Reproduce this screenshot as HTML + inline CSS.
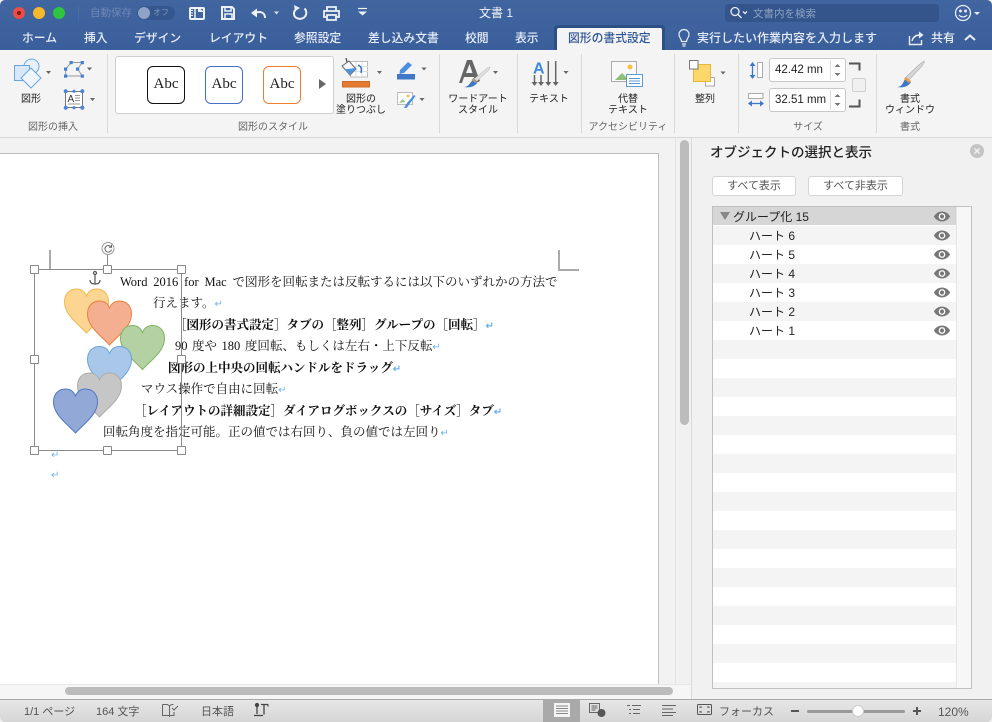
<!DOCTYPE html>
<html lang="ja"><head><meta charset="utf-8"><style>
html,body{margin:0;padding:0}
body{width:992px;height:722px;overflow:hidden;position:relative;background:#f1f1f1;font-family:"Liberation Sans","Noto Sans CJK JP",sans-serif;font-size:11px;color:#222}
.a{position:absolute}
.t{position:absolute;white-space:nowrap;line-height:14px}
.tab{position:absolute;top:30px;font-size:11.8px;line-height:16px;color:#e8eef8;white-space:nowrap;font-weight:500}
.lab{position:absolute;font-size:10px;line-height:11px;color:#222;text-align:center;white-space:pre;transform:translateX(-50%)}
.grp{position:absolute;top:121px;font-size:10px;line-height:13px;color:#666;white-space:nowrap;transform:translateX(-50%)}
.sep{position:absolute;top:54px;width:1px;height:79px;background:#d9d9d9}
.d{position:absolute;white-space:nowrap;font-family:"Liberation Serif","Noto Serif CJK SC",serif;font-size:12.5px;line-height:18px;color:#111}
.b{font-weight:700}
.r{color:#6fb2ee;font-size:10px}
.h{position:absolute;width:7px;height:7px;background:#fff;border:1px solid #888;border-radius:1px}
.row{position:absolute;left:713px;width:243px;height:19px;font-size:12px;line-height:21px;color:#222}
.row span{position:absolute;left:36px}
.eye{position:absolute;left:220px;top:3px}
.ab{position:absolute;width:36px;height:36px;border-radius:6px;background:#fff;top:66px;font:15px/34px "Liberation Serif",serif;text-align:center;color:#222}
.btn{position:absolute;top:176px;height:18px;background:#fff;border:1px solid #d4d4d4;border-radius:3px;text-align:center;font-size:11px;line-height:18px;color:#555}
.inp{position:absolute;left:769px;width:75px;height:22px;background:#fff;border:1px solid #c8c8c8;border-radius:3px;font-size:11.5px;line-height:22px;text-indent:5px;color:#222;overflow:hidden}
</style></head><body>

<!-- title bar -->
<div class="a" style="left:0;top:0;width:992px;height:50px;background:linear-gradient(#41659f,#3a5f9c);border-radius:5px 5px 0 0"></div>
<div class="a" style="left:13px;top:7px;width:12px;height:12px;border-radius:50%;background:#ed4c47"></div>
<div class="a" style="left:17px;top:11px;width:4px;height:4px;border-radius:50%;background:#7d1a14"></div>
<div class="a" style="left:33px;top:7px;width:12px;height:12px;border-radius:50%;background:#f6b92c"></div>
<div class="a" style="left:53px;top:7px;width:12px;height:12px;border-radius:50%;background:#2dc43f"></div>
<div class="a" style="left:78px;top:5px;width:1px;height:16px;background:#4c6da3"></div>
<div class="t" style="left:90px;top:6px;font-size:10.5px;color:#6f87b3">自動保存</div>
<div class="a" style="left:137px;top:6px;width:38px;height:14px;border-radius:7px;background:#34578f"></div>
<div class="a" style="left:138px;top:7px;width:12px;height:12px;border-radius:50%;background:#8ea3c6"></div>
<div class="t" style="left:153px;top:6px;font-size:8px;color:#7f96bd">オフ</div>
<svg class="a" style="left:0;top:0" width="400" height="26" fill="none" stroke="#eef2f8" stroke-width="2">
<rect x="190" y="8" width="14" height="11" rx="1"/><path d="M195 8v11" stroke-width="1.500"/><path d="M191 10.500h2M191 13h2M191 15.500h2" stroke-width="1"/><path d="M198 7l6 5h-6z" fill="#eef2f8" stroke="none"/>
<path d="M222 7h10l2 2v10h-12z"/><path d="M225 7v4h6V7M225 19v-5h7v5" stroke-width="1.500"/>
<path d="M251 13l6-4.500v9z" fill="#eef2f8" stroke="none"/><path d="M255 13c5-2 10-1 10 5"/><path d="M274 11.500h5l-2.500 3z" fill="#d5deed" stroke="none"/>
<path d="M298 8c-3 1.500-4.500 3.500-4 6.500.6 3.500 6 6 10 3 3-2.500 3-6.500.5-9"/><path d="M294 5l6 3-5 3z" fill="#eef2f8" stroke="none"/>
<path d="M327 11V7h9v4M327 17h-3v-6h15v6h-3M327 15h9v5h-9z" stroke-width="1.800"/>
<path d="M358 8.500h9" stroke-width="1.200"/><path d="M358 11.500h9l-4.500 4z" fill="#eef2f8" stroke="none"/>
</svg>
<div class="t" style="left:479px;top:6px;font-size:12px;color:#f0f3f8">文書 1</div>
<div class="a" style="left:725px;top:4px;width:214px;height:18px;background:#34558c;border-radius:3px"></div>
<svg class="a" style="left:728px;top:5px" width="24" height="16" fill="none" stroke="#e9eef6" stroke-width="1.300"><circle cx="7" cy="6.500" r="4"/><path d="M10 9.500l3.500 3.500"/><path d="M15 6.500l2 2 2-2"/></svg>
<div class="t" style="left:753px;top:7px;font-size:10.5px;color:#8ea2c4">文書内を検索</div>
<svg class="a" style="left:954px;top:4px" width="30" height="20" fill="none" stroke="#e9eef6" stroke-width="1.300"><circle cx="9" cy="9" r="7.500"/><circle cx="6.500" cy="7" r=".8" fill="#e9eef6"/><circle cx="11.500" cy="7" r=".8" fill="#e9eef6"/><path d="M5 11c2 2.500 6 2.500 8 0"/><path d="M20 8h6l-3 3z" fill="#e9eef6" stroke="none"/></svg>

<!-- tabs -->
<div class="tab" style="left:22px">ホーム</div>
<div class="tab" style="left:84px">挿入</div>
<div class="tab" style="left:134px">デザイン</div>
<div class="tab" style="left:209px">レイアウト</div>
<div class="tab" style="left:294px">参照設定</div>
<div class="tab" style="left:368px">差し込み文書</div>
<div class="tab" style="left:465px">校閲</div>
<div class="tab" style="left:515px">表示</div>
<div class="a" style="left:554px;top:25px;width:111px;height:25px;background:#2c4f86;border-radius:4px 4px 0 0"></div>
<div class="a" style="left:557px;top:28px;width:105px;height:22px;background:#f4f4f4;border-radius:2px 2px 0 0"></div>
<div class="tab" style="left:568px;color:#2f5597">図形の書式設定</div>
<svg class="a" style="left:676px;top:28px" width="16" height="20" fill="none" stroke="#e9eef6" stroke-width="1.200"><path d="M5.500 13.500c0-3-2.500-3.500-2.500-7a5 5 0 0 1 10 0c0 3.500-2.500 4-2.500 7z"/><path d="M6 16h4M6.500 18h3"/></svg>
<div class="tab" style="left:697px;font-size:12px">実行したい作業内容を入力します</div>
<svg class="a" style="left:908px;top:30px" width="18" height="16" fill="none" stroke="#e9eef6" stroke-width="1.400"><path d="M1.500 6v8.500h12V10"/><path d="M4 11c1-4 4-6 8-6"/><path d="M11 1.500l4.500 3.500-4.500 3.500z" fill="#e9eef6" stroke="none"/></svg>
<div class="tab" style="left:931px;font-size:12px">共有</div>
<svg class="a" style="left:963px;top:33px" width="14" height="10" fill="none" stroke="#e9eef6" stroke-width="2"><path d="M2 7l5-4.500L12 7"/></svg>

<!-- ribbon -->
<div class="a" style="left:0;top:50px;width:992px;height:87px;background:#f4f4f4;border-bottom:1px solid #d6d6d6"></div>
<div class="sep" style="left:107px"></div><div class="sep" style="left:439px"></div><div class="sep" style="left:517px"></div><div class="sep" style="left:581px"></div><div class="sep" style="left:674px"></div><div class="sep" style="left:738px"></div><div class="sep" style="left:876px"></div>

<div class="a" style="left:115px;top:56px;width:217px;height:56px;background:#fff;border:1px solid #cfcfcf;border-radius:3px"></div>
<div class="ab" style="left:147px;border:1px solid #111">Abc</div>
<div class="ab" style="left:205px;border:1px solid #4472c4">Abc</div>
<div class="ab" style="left:263px;border:1px solid #ed7d31">Abc</div>

<svg class="a" style="left:0;top:0" width="992" height="140" fill="none">
<!-- shapes -->
<g stroke="#6aa6de" stroke-width="1"><circle cx="31.500" cy="66.500" r="7.500" fill="#e8f1fb"/><rect x="14.500" y="65.500" width="15" height="15" fill="#d9e8f8"/><path d="M31 68l10 10-10 10-10-10z" fill="#eef5fc"/></g>
<path d="M65.700 69L71 62.500h11.300L77.700 69l4.600 7H65.700z" stroke="#999"/>
<g fill="#3f80d8"><rect x="64" y="67.500" width="3.200" height="3.200"/><rect x="69.500" y="61" width="3.200" height="3.200"/><rect x="80.700" y="61" width="3.200" height="3.200"/><rect x="76" y="67.500" width="3.200" height="3.200"/><rect x="64" y="74.500" width="3.200" height="3.200"/><rect x="80.700" y="74.500" width="3.200" height="3.200"/></g>
<path d="M46 71h5l-2.500 3zM87 67.500h5l-2.500 3zM90 98h5l-2.500 3z" fill="#666"/>
<rect x="65.500" y="91.500" width="17" height="16" fill="#fff" stroke="#777"/>
<g fill="#4a86d8"><circle cx="65.700" cy="91.300" r="2"/><circle cx="82.300" cy="91.300" r="2"/><circle cx="65.700" cy="107.700" r="2"/><circle cx="82.300" cy="107.700" r="2"/><circle cx="74" cy="91.300" r="1.600"/><circle cx="74" cy="107.700" r="1.600"/></g>
<text x="67.500" y="102" font-family="Liberation Sans" font-size="10" fill="#333">A</text>
<path d="M75 95.500h5M75 98h5M75 100.500h5M68 104h12" stroke="#999"/>
<path d="M318 79l7 5-7 5z" fill="#666" transform="translate(1,0)"/>
<!-- fill -->
<rect x="350.500" y="61.500" width="17" height="15.500" fill="#fff" stroke="#bbb"/><path d="M356 62v15M362 62v15M351 66.500h17M351 71.500h17" stroke="#ddd"/>
<path d="M342 66l7-5 7 8-6 6z" fill="#f4f8fc" stroke="#666"/><path d="M344 69l6 6 6-6-1-1-6 1z" fill="#4f92d6"/><path d="M347 62l-1-4" stroke="#444" stroke-width="1.200"/>
<path d="M358 65c3 1 4 4 3 8" stroke="#2f75c5" stroke-width="1.400"/>
<rect x="342.500" y="81.500" width="27" height="5.500" fill="#e67c34" stroke="#cf6a22"/>
<path d="M377 71h5l-2.500 3zM421.500 67.500h5l-2.500 3zM419.500 98h5l-2.500 3z" fill="#666"/>
<path d="M400 70l8-8 4 3-8 8-4.500 1z" fill="#4a8ee0"/><rect x="397" y="74" width="18" height="5.500" fill="#3f78c6"/>
<rect x="397.500" y="92.500" width="15" height="12" fill="#fff" stroke="#bbb"/><path d="M399 103l3.500-4 3 3z" fill="#9cc58a"/><circle cx="408" cy="96" r="1.500" fill="#f0c060"/>
<path d="M404 108l3-5 7-8 1.500 1-6 8-3 4z" fill="#4a8ee0"/>
<!-- word art -->
<path d="M459 83l8-23h5l8 21-4 2-2-6h-10l-2 6zM466 73h6.500L469.500 64z" fill="#666"/>
<path d="M473 80l14-12 3-1-1 3-13 12z" fill="#ddd" stroke="#bbb" stroke-width=".5"/><path d="M464 87c5 0 6-5 9-7l4 3c-3 4-8 5-13 4z" fill="#3d78c8"/><path d="M471.500 80l2-2 3.500 3-2 2z" fill="#a89a86"/>
<path d="M493 71h5l-2.500 3z" fill="#666"/>
<!-- text -->
<text x="533" y="73.500" font-family="Liberation Sans" font-size="16" font-weight="700" fill="#3f88dc">A</text>
<path d="M534.500 75v8M541 75v8M548.300 61v22M555.700 61v22" stroke="#666" stroke-width="1.500"/>
<path d="M531.500 82h6l-3 4zM538 82h6l-3 4zM545.300 82h6l-3 4zM552.700 82h6l-3 4zM563.500 71h5l-2.500 3z" fill="#666"/>
<!-- alt -->
<rect x="611.500" y="61.500" width="25" height="20" fill="#f8f8f8" stroke="#aaa"/><circle cx="630" cy="67" r="2.500" fill="#f6c04d"/><path d="M615 80l7-7 7 7z" fill="#8dbf78"/><rect x="626.500" y="74.500" width="16" height="12" fill="#fff" stroke="#5b9bd5"/><path d="M629 78.500h11M629 81h11M629 83.500h11" stroke="#5b9bd5"/>
<!-- arrange -->
<rect x="705.500" y="77.500" width="9" height="8.500" fill="#fff" stroke="#aaa"/><rect x="693.500" y="64.500" width="17" height="17" fill="#fdd76a" stroke="#e8b63a"/><rect x="689.500" y="60.500" width="8.500" height="8.500" fill="#fff" stroke="#777"/><path d="M720.500 71.500h5l-2.500 3z" fill="#666"/>
<!-- size -->
<path d="M752.500 63v15" stroke="#3d78c8" stroke-width="1.300"/><path d="M749.500 66l3-4 3 4zM749.500 75l3 4 3-4z" fill="#3d78c8"/><rect x="757.500" y="62.500" width="5" height="15" fill="#fff" stroke="#aaa"/><rect x="748.500" y="93.500" width="14.500" height="5" fill="#fff" stroke="#aaa"/><path d="M749 103.500h14" stroke="#3d78c8" stroke-width="1.300"/><path d="M752 100.500l-4 3 4 3zM760 100.500l4 3-4 3z" fill="#3d78c8"/>
<!-- brush -->
<path d="M905 78l15-14 4-3 .5 1-2.500 4-14 15z" fill="#d6d6d6" stroke="#aaa" stroke-width=".6"/><path d="M897 87c6 0 6-6 9-9l5 4c-3 5-8 6-14 5z" fill="#3d78c8"/><path d="M904 79l2-2 5 4-2 2z" fill="#e89b4c"/>
</svg>

<div class="lab" style="left:31px;top:94px">図形</div>
<div class="grp" style="left:53px">図形の挿入</div>
<div class="grp" style="left:273px">図形のスタイル</div>
<div class="lab" style="left:361px;top:94px">図形の
塗りつぶし</div>
<div class="lab" style="left:478px;top:94px">ワードアート
スタイル</div>
<div class="lab" style="left:549px;top:94px">テキスト</div>
<div class="lab" style="left:628px;top:94px">代替
テキスト</div>
<div class="grp" style="left:628px">アクセシビリティ</div>
<div class="lab" style="left:705px;top:94px">整列</div>
<div class="inp" style="top:58px">42.42 mn</div>
<div class="inp" style="top:88px">32.51 mm</div>
<svg class="a" style="left:829px;top:59px" width="36" height="54" fill="none"><rect x="2" y="0" width="13" height="22" fill="#fff"/><rect x="2" y="30" width="13" height="22" fill="#fff"/><path d="M1.500 1v20M1.500 31v20" stroke="#ddd"/><path d="M5.500 8l3-3 3 3zM5.500 14l3 3 3-3zM5.500 38l3-3 3 3zM5.500 44l3 3 3-3z" fill="#777"/><path d="M20 4.500h10.500v7M20 47.500h10.500v-7" stroke="#555" stroke-width="2"/></svg>
<div class="a" style="left:852px;top:78px;width:12px;height:12px;background:#f0f0f0;border:1px solid #cfcfcf;border-radius:2px"></div>
<div class="grp" style="left:808px">サイズ</div>
<div class="lab" style="left:910px;top:94px">書式
ウィンドウ</div>
<div class="grp" style="left:910px">書式</div>

<!-- document -->
<div class="a" style="left:0;top:138px;width:676px;height:546px;background:#f2f2f2"></div>
<div class="a" style="left:0;top:153px;width:659px;height:531px;background:#fff;border:1px solid #bdbdbd;border-left:0;border-bottom:0;box-sizing:border-box"></div>
<div class="a" style="left:675px;top:138px;width:1px;height:546px;background:#e4e4e4"></div>
<div class="a" style="left:680px;top:140px;width:9px;height:285px;border-radius:5px;background:#bcbcbc"></div>
<div class="a" style="left:691px;top:138px;width:1px;height:561px;background:#d8d8d8"></div>
<div class="a" style="left:0;top:684px;width:691px;height:15px;background:#f6f6f6;border-top:1px solid #e8e8e8;box-sizing:border-box"></div>
<div class="a" style="left:65px;top:687px;width:608px;height:8px;border-radius:4px;background:#bcbcbc"></div>

<div class="a" style="left:49px;top:250px;width:2px;height:19px;background:#aaa"></div>
<div class="a" style="left:33px;top:269px;width:18px;height:1px;background:#aaa"></div>
<div class="a" style="left:558px;top:250px;width:2px;height:20px;background:#aaa"></div>
<div class="a" style="left:558px;top:269px;width:21px;height:2px;background:#aaa"></div>

<!-- text -->
<div class="d" style="left:120px;top:273px;word-spacing:2.7px">Word 2016 for Mac で図形を回転または反転するには以下のいずれかの方法で</div>
<div class="d" style="left:153px;top:294px">行えます。<span class="r">↵</span></div>
<div class="d b" style="left:174px;top:316px">［図形の書式設定］タブの［整列］グループの［回転］<span class="r">↵</span></div>
<div class="d" style="left:175px;top:337px;word-spacing:1.400px">90 度や 180 度回転、もしくは左右・上下反転<span class="r">↵</span></div>
<div class="d b" style="left:168px;top:359px">図形の上中央の回転ハンドルをドラッグ<span class="r">↵</span></div>
<div class="d" style="left:141px;top:380px">マウス操作で自由に回転<span class="r">↵</span></div>
<div class="d b" style="left:134px;top:402px">［レイアウトの詳細設定］ダイアログボックスの［サイズ］タブ<span class="r">↵</span></div>
<div class="d" style="left:103px;top:423px">回転角度を指定可能。正の値では右回り、負の値では左回り<span class="r">↵</span></div>
<div class="d r" style="left:51px;top:447px">↵</div>
<div class="d r" style="left:51px;top:467px">↵</div>

<!-- hearts + selection -->
<svg class="a" style="left:30px;top:240px" width="160" height="215">
<defs>
<path id="hh" d="M22 44C14 35 0 26 0 13 0 5 5 0 12 0c4 0 8 2 10 7 2-5 6-7 10-7 7 0 12 5 12 13 0 13-14 22-22 31z"/>
</defs>
<g stroke-width="1">
<use href="#hh" x="34.500" y="49" fill="#fdd592" stroke="#f3b84a"/>
<use href="#hh" x="57.500" y="61" fill="#f4ae90" stroke="#e8813f"/>
<use href="#hh" x="90.500" y="85.500" fill="#b3d1a2" stroke="#7fb35f"/>
<use href="#hh" x="57.500" y="106.500" fill="#a9c7e8" stroke="#6aa3dc"/>
<use href="#hh" x="47.500" y="133" fill="#c6c6c6" stroke="#adadad"/>
<use href="#hh" x="23.500" y="149" fill="#92a9d8" stroke="#4f78c4"/>
</g>
<path d="M4.500 29.500h147v181H4.500z" fill="none" stroke="#8a8a8a"/>
<path d="M77.500 29.500V14" stroke="#8a8a8a"/>
<circle cx="78" cy="8.500" r="6" fill="#fff" stroke="#999"/>
<path d="M81 7a3.300 3.300 0 1 0 .5 2.500M81.500 4.800V7.300h-2.500" fill="none" stroke="#666"/>
<g fill="none" stroke="#555" stroke-width="1.200"><circle cx="65" cy="33" r="1.500"/><path d="M65 35v9M60 40c0 3 2 4 5 4s5-1 5-4"/></g>
</svg>
<div class="h" style="left:30px;top:265px"></div><div class="h" style="left:103px;top:265px"></div><div class="h" style="left:177px;top:265px"></div>
<div class="h" style="left:30px;top:355px"></div><div class="h" style="left:177px;top:355px"></div>
<div class="h" style="left:30px;top:446px"></div><div class="h" style="left:103px;top:446px"></div><div class="h" style="left:177px;top:446px"></div>

<!-- selection pane -->
<div class="a" style="left:692px;top:138px;width:300px;height:561px;background:#f1f1f1"></div>
<div class="t" style="left:710px;top:145px;font-size:13.5px;line-height:16px;font-weight:500;color:#222">オブジェクトの選択と表示</div>
<svg class="a" style="left:970px;top:144px" width="14" height="14"><circle cx="7" cy="7" r="7" fill="#c4c4c4"/><path d="M4.500 4.500l5 5M9.500 4.500l-5 5" stroke="#f1f1f1" stroke-width="1.500"/></svg>
<div class="btn" style="left:712px;width:82px">すべて表示</div>
<div class="btn" style="left:808px;width:93px">すべて非表示</div>

<div class="a" style="left:712px;top:206px;width:260px;height:483px;background:#fff;border:1px solid #c0c0c0;box-sizing:border-box"></div>
<div class="a" style="left:956px;top:207px;width:15px;height:481px;background:#f7f7f7;border-left:1px solid #e6e6e6;box-sizing:border-box"></div>
<div class="a" style="left:713px;top:207px;width:243px;height:481px;background:repeating-linear-gradient(#fff 0 19px,#f4f4f4 19px 38px)"></div>
<svg width="0" height="0" style="position:absolute"><defs><g id="ey"><path d="M1 7c2-3.500 5.500-5.500 9-5.500s7 2 9 5.500c-2 3.500-5.500 5.500-9 5.500S3 10.500 1 7z" fill="#777"/><circle cx="10" cy="7" r="3.700" fill="#fff"/><circle cx="10" cy="7" r="2.300" fill="#777"/></g></defs></svg>
<div class="row" style="top:207px;height:18px;background:#d6d6d6;line-height:20px"><span style="left:20px">グループ化 15</span>
<svg class="eye" style="top:3px" width="18" height="13" viewBox="0 0 20 14"><use href="#ey"/></svg>
<svg class="a" style="left:7px;top:4px" width="10" height="10"><path d="M0 1h10L5 9z" fill="#888"/></svg></div>
<div class="a" style="left:713px;top:225px;width:243px;height:1px;background:#fff"></div>
<div class="row" style="top:226px;background:#f4f4f4"><span>ハート 6</span><svg class="eye" width="18" height="13" viewBox="0 0 20 14"><use href="#ey"/></svg></div>
<div class="row" style="top:245px;background:#fff"><span>ハート 5</span><svg class="eye" width="18" height="13" viewBox="0 0 20 14"><use href="#ey"/></svg></div>
<div class="row" style="top:264px;background:#f4f4f4"><span>ハート 4</span><svg class="eye" width="18" height="13" viewBox="0 0 20 14"><use href="#ey"/></svg></div>
<div class="row" style="top:283px;background:#fff"><span>ハート 3</span><svg class="eye" width="18" height="13" viewBox="0 0 20 14"><use href="#ey"/></svg></div>
<div class="row" style="top:302px;background:#f4f4f4"><span>ハート 2</span><svg class="eye" width="18" height="13" viewBox="0 0 20 14"><use href="#ey"/></svg></div>
<div class="row" style="top:321px;background:#fff"><span>ハート 1</span><svg class="eye" width="18" height="13" viewBox="0 0 20 14"><use href="#ey"/></svg></div>

<!-- status bar -->
<div class="a" style="left:0;top:699px;width:992px;height:23px;background:linear-gradient(#e6e6e6,#d6d6d6);border-top:1px solid #a8a8a8;box-sizing:border-box;border-radius:0 0 5px 5px"></div>
<div class="t" style="left:24px;top:705px;color:#555;font-size:11px">1/1 ページ</div>
<div class="t" style="left:96px;top:705px;color:#555;font-size:11px">164 文字</div>
<svg class="a" style="left:162px;top:703px" width="17" height="15" fill="none" stroke="#666"><path d="M.5 1.500h5l2 1.500v11M7.500 3c1-1 2-1.500 3-1.500h1M7.500 12.500h-7v-11M7.500 12.500H12V9"/><path d="M10 5l2 2 4-4"/></svg>
<div class="t" style="left:201px;top:705px;color:#555;font-size:11px">日本語</div>
<svg class="a" style="left:253px;top:702px" width="18" height="16" fill="none" stroke="#444" stroke-width="1.300"><circle cx="4" cy="3" r="1.500" fill="#444"/><path d="M4 5v7M1 13.500h9M8 2.500h7M11 2.500v10"/><path d="M15 2.500v2"/></svg>
<div class="a" style="left:543px;top:700px;width:37px;height:22px;background:#a9a9a9"></div>
<svg class="a" style="left:553px;top:703px" width="18" height="15"><rect width="16" height="14" fill="#f4f4f4" x="1"/><path d="M3 3h12M3 5.500h12M3 8h12M3 10.500h12" stroke="#8a8a8a"/></svg>
<svg class="a" style="left:588px;top:702px" width="20" height="16" fill="none" stroke="#666"><path d="M1.500 1.500h10v9h-10zM3.500 4h6M3.500 6h6M3.500 8h4"/><circle cx="13.500" cy="11" r="4" fill="#555" stroke="none"/></svg>
<svg class="a" style="left:626px;top:703px" width="16" height="14" stroke="#666" fill="none"><path d="M1 2.500h3M6 2.500h9M3 6.500h2M7 6.500h7M3 10.500h2M7 10.500h7"/></svg>
<svg class="a" style="left:661px;top:704px" width="16" height="12" stroke="#666" fill="none"><path d="M1 1.500h14M1 5h11M1 8.500h14M1 11.500h11"/></svg>
<svg class="a" style="left:697px;top:704px" width="16" height="12" stroke="#555" fill="none"><rect x=".5" y=".5" width="14" height="10" rx="1"/><path d="M3 4V3h2M12 4V3h-2M3 7v1h2M12 7v1h-2"/></svg>
<div class="t" style="left:719px;top:705px;color:#555;font-size:11px">フォーカス</div>
<div class="a" style="left:791px;top:710px;width:8px;height:2px;background:#555"></div>
<div class="a" style="left:807px;top:710px;width:98px;height:3px;background:#999;border-radius:2px"></div>
<div class="a" style="left:852px;top:705px;width:12px;height:12px;border-radius:50%;background:#fff;border:1px solid #ccc;box-sizing:border-box"></div>
<div class="a" style="left:913px;top:710px;width:8px;height:2px;background:#555"></div>
<div class="a" style="left:916px;top:707px;width:2px;height:8px;background:#555"></div>
<div class="t" style="left:938px;top:705px;color:#555;font-size:12px">120%</div>
</body></html>
